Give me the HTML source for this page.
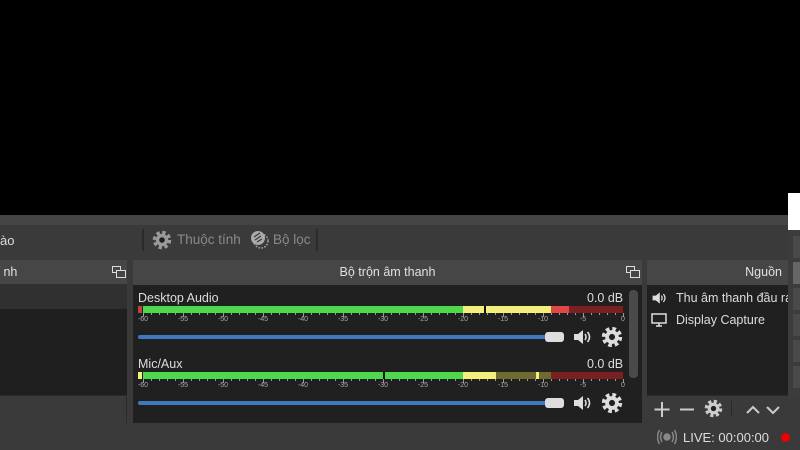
<!DOCTYPE html>
<html><head><meta charset="utf-8"><style>
*{margin:0;padding:0;box-sizing:border-box}
body{width:800px;height:450px;background:#000;position:relative;overflow:hidden;font-family:"Liberation Sans","DejaVu Sans",sans-serif;color:#ddd;font-size:12.5px}
.a{position:absolute}
.hdr{background:#464646;color:#e0e0e0;font-size:12.5px;line-height:24px}
.tick{position:absolute;font-size:7px;color:#aaa;transform:translateX(-50%)}
</style></head><body>
<svg width="0" height="0" style="position:absolute">
<defs>
<symbol id="gear" viewBox="0 0 20 20"><circle cx="10" cy="10" r="7.5" fill="none" stroke="currentColor" stroke-width="3.5" stroke-dasharray="3.3 2.6"/><circle cx="10" cy="10" r="6.2" fill="currentColor"/><circle cx="10" cy="10" r="2.8" fill="#202020"/></symbol>
<symbol id="spk" viewBox="0 0 20 20"><path d="M2 7h4l5-4v14l-5-4H2z" fill="currentColor"/><path d="M13 7q2 3 0 6M15.5 5q4 5 0 10" stroke="currentColor" stroke-width="1.6" fill="none"/></symbol>
<symbol id="dock" viewBox="0 0 14 12"><rect x="0.5" y="0.5" width="8" height="6" fill="none" stroke="#ddd"/><rect x="4.5" y="4.5" width="9" height="7" fill="#464646" stroke="#ddd"/></symbol>
</defs></svg>

<div class="a" style="left:0;top:215px;width:800px;height:10px;background:#454545"></div>
<div class="a" style="left:0;top:225px;width:800px;height:225px;background:#3a3a3a"></div>
<div class="a" style="left:0;top:233px;font-size:13px;color:#ddd">ào</div>
<div class="a" style="left:142px;top:229px;width:2px;height:22px;background:#2a2a2a"></div>
<svg class="a" style="left:152px;top:230px;color:#9a9a9a" width="20" height="20"><use href="#gear"/></svg>
<div class="a" style="left:177px;top:232px;color:#8a8a8a;font-size:13.5px">Thuộc tính</div>
<svg class="a" style="left:249px;top:229px" width="20" height="20"><circle cx="12" cy="12" r="7" fill="none" stroke="#aaa" stroke-width="1.5" stroke-dasharray="1.5 1.5"/><circle cx="9" cy="9" r="7" fill="#aaa"/><path d="M5 8l6-4M6 11l6-4M8 13l5-3" stroke="#3a3a3a" stroke-width="1.2"/></svg>
<div class="a" style="left:273px;top:232px;color:#8a8a8a;font-size:13.5px">Bộ lọc</div>
<div class="a" style="left:316px;top:229px;width:2px;height:22px;background:#2a2a2a"></div>

<!-- left panel -->
<div class="a hdr" style="left:0;top:260px;width:127px;height:24px">&nbsp;nh</div>
<svg class="a" style="left:112px;top:266px" width="14" height="12"><use href="#dock"/></svg>
<div class="a" style="left:0;top:284px;width:127px;height:25px;background:#303030"></div>
<div class="a" style="left:0;top:309px;width:127px;height:86px;background:#1f1f1f"></div>
<div class="a" style="left:0;top:395px;width:127px;height:28px;background:#3a3a3a;border-top:1px solid #2a2a2a;border-right:1px solid #2a2a2a"></div>

<!-- mixer -->
<div class="a hdr" style="left:133px;top:260px;width:509px;height:25px;text-align:center">Bộ trộn âm thanh</div>
<svg class="a" style="left:626px;top:266px" width="14" height="12"><use href="#dock"/></svg>
<div class="a" style="left:133px;top:285px;width:509px;height:138px;background:#202020"></div>
<div class="a" style="left:629px;top:290px;width:9px;height:88px;background:#4a4a4a;border-radius:4px"></div>

<div class="a" style="left:138px;top:291px">Desktop Audio</div>
<div class="a" style="left:587px;top:291px">0.0 dB</div>
<div class="a" style="left:138px;top:306px;width:4px;height:7px;background:#c04040"></div>
<div class="a" style="left:143px;top:306px;width:320px;height:7px;background:#4cd94c"></div>
<div class="a" style="left:463px;top:306px;width:88px;height:7px;background:#f2f07a"></div>
<div class="a" style="left:484px;top:306px;width:2px;height:7px;background:#111"></div>
<div class="a" style="left:551px;top:306px;width:18px;height:7px;background:#e04848"></div>
<div class="a" style="left:569px;top:306px;width:54px;height:7px;background:#7a2020"></div>
<div class="a" style="left:138px;top:335px;width:410px;height:4px;background:#3d78c0;border-radius:2px"></div>
<div class="a" style="left:545px;top:332px;width:19px;height:10px;background:#ddd;border-radius:3px"></div>
<svg class="a" style="left:571px;top:327px;color:#ddd" width="22" height="20"><use href="#spk"/></svg>
<svg class="a" style="left:601px;top:326px;color:#ddd" width="22" height="22"><use href="#gear"/></svg>

<div class="a" style="left:138px;top:357px">Mic/Aux</div>
<div class="a" style="left:587px;top:357px">0.0 dB</div>
<div class="a" style="left:138px;top:372px;width:4px;height:7px;background:#f2f07a"></div>
<div class="a" style="left:143px;top:372px;width:320px;height:7px;background:#4cd94c"></div>
<div class="a" style="left:383px;top:372px;width:2px;height:7px;background:#111"></div>
<div class="a" style="left:463px;top:372px;width:33px;height:7px;background:#f2f07a"></div>
<div class="a" style="left:496px;top:372px;width:55px;height:7px;background:#6e6a30"></div>
<div class="a" style="left:536px;top:372px;width:3px;height:7px;background:#f2f07a"></div>
<div class="a" style="left:551px;top:372px;width:72px;height:7px;background:#7a2020"></div>
<div class="a" style="left:138px;top:401px;width:410px;height:4px;background:#3d78c0;border-radius:2px"></div>
<div class="a" style="left:545px;top:398px;width:19px;height:10px;background:#ddd;border-radius:3px"></div>
<svg class="a" style="left:571px;top:393px;color:#ddd" width="22" height="20"><use href="#spk"/></svg>
<svg class="a" style="left:601px;top:392px;color:#ddd" width="22" height="22"><use href="#gear"/></svg>

<div id="sc1"></div>
<script>
var h='';
[[313],[379]].forEach(function(r){var y=r[0];
for(var i=0;i<=60;i++){var x=143+i*8;h+='<div class="a" style="left:'+x+'px;top:'+y+'px;width:1px;height:'+(i%5==0?4:2)+'px;background:#999"></div>';}
for(var k=0;k<=12;k++){var x=143+k*40;h+='<div class="tick" style="left:'+x+'px;top:'+(y+3)+'px">'+(k==12?'0':'-'+(60-k*5))+'</div>';}
});
document.getElementById('sc1').innerHTML=h;
</script>

<!-- sources -->
<div class="a hdr" style="left:647px;top:260px;width:141px;height:25px;text-align:right;padding-right:6px">Nguồn</div>
<div class="a" style="left:647px;top:285px;width:141px;height:110px;background:#202020"></div>
<svg class="a" style="left:651px;top:290px;color:#ddd" width="16" height="16"><use href="#spk"/></svg>
<div class="a" style="left:676px;top:291px;white-space:nowrap;width:112px;overflow:hidden">Thu âm thanh đầu ra</div>
<svg class="a" style="left:651px;top:313px" width="16" height="14"><rect x="1" y="1" width="14" height="9" fill="none" stroke="#ddd" stroke-width="1.5"/><path d="M5 13h6M8 10v3" stroke="#ddd" stroke-width="1.5"/></svg>
<div class="a" style="left:676px;top:313px">Display Capture</div>
<div class="a" style="left:647px;top:395px;width:141px;height:28px;background:#3a3a3a;border-top:1px solid #2a2a2a"></div>
<svg class="a" style="left:652px;top:400px" width="130" height="18" stroke="#ccc" stroke-width="2" fill="none">
<path d="M10 2v15M2.5 9.5h15M28 9.5h14"/><path d="M95 13l6-6 6 6M115 7l6 6 6-6"/></svg>
<svg class="a" style="left:704px;top:399px;color:#ccc" width="19" height="19"><use href="#gear"/></svg>
<div class="a" style="left:731px;top:401px;width:1px;height:16px;background:#2a2a2a"></div>

<!-- right strip -->
<div class="a" style="left:788px;top:193px;width:12px;height:37px;background:#fff"></div>
<div class="a" style="left:788px;top:230px;width:12px;height:168px;background:#3c3c3c"></div>
<div class="a" style="left:793px;top:236px;width:7px;height:22px;background:#4a4a4a"></div>
<div class="a" style="left:793px;top:262px;width:7px;height:22px;background:#666"></div>
<div class="a" style="left:793px;top:288px;width:7px;height:22px;background:#4a4a4a"></div>
<div class="a" style="left:793px;top:314px;width:7px;height:22px;background:#4a4a4a"></div>
<div class="a" style="left:793px;top:340px;width:7px;height:22px;background:#4a4a4a"></div>
<div class="a" style="left:793px;top:366px;width:7px;height:22px;background:#4a4a4a"></div>

<!-- status -->
<svg class="a" style="left:657px;top:429px" width="20" height="16" fill="none" stroke="#888" stroke-width="1.5"><circle cx="10" cy="8" r="3" fill="#888"/><path d="M5 3q-3 5 0 10M15 3q3 5 0 10M2.5 1q-4 7 0 14M17.5 1q4 7 0 14"/></svg>
<div class="a" style="left:683px;top:430px;color:#ddd;font-size:13px">LIVE: 00:00:00</div>
<div class="a" style="left:781px;top:433px;width:9px;height:9px;border-radius:50%;background:#e00"></div>
</body></html>
